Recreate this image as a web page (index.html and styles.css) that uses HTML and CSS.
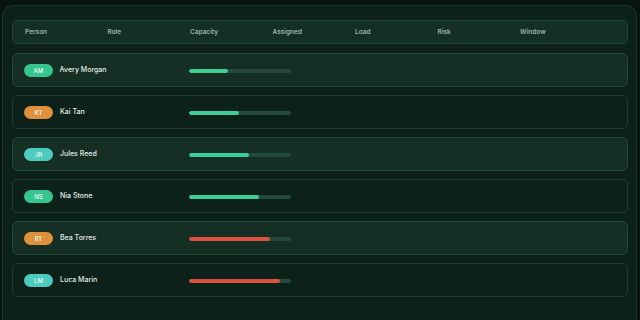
FILE: index.html
```html
<!DOCTYPE html>
<html>
<head>
<meta charset="utf-8">
<link rel="stylesheet" href="styles.css">
</head>
<body>
<div class="panel">
  <div class="head">
    <span>Person</span><span>Role</span><span>Capacity</span><span>Assigned</span><span>Load</span><span>Risk</span><span>Window</span>
  </div>
  <div class="row alt">
    <div class="who"><span class="badge green">AM</span><span class="name">Avery Morgan</span></div>
    <div></div>
    <div class="bar"><div class="fill ok" style="width:38%"></div></div>
  </div>
  <div class="row">
    <div class="who"><span class="badge orange">KT</span><span class="name">Kai Tan</span></div>
    <div></div>
    <div class="bar"><div class="fill ok" style="width:49%"></div></div>
  </div>
  <div class="row alt">
    <div class="who"><span class="badge teal">JR</span><span class="name">Jules Reed</span></div>
    <div></div>
    <div class="bar"><div class="fill ok" style="width:59%"></div></div>
  </div>
  <div class="row">
    <div class="who"><span class="badge green">NS</span><span class="name">Nia Stone</span></div>
    <div></div>
    <div class="bar"><div class="fill ok" style="width:69%"></div></div>
  </div>
  <div class="row alt">
    <div class="who"><span class="badge orange">BT</span><span class="name">Bea Torres</span></div>
    <div></div>
    <div class="bar"><div class="fill bad" style="width:79%"></div></div>
  </div>
  <div class="row">
    <div class="who"><span class="badge teal">LM</span><span class="name">Luca Marin</span></div>
    <div></div>
    <div class="bar"><div class="fill bad" style="width:89%"></div></div>
  </div>
</div>
</body>
</html>
```
FILE: styles.css
```css
html, body {
  margin: 0;
  padding: 0;
  background: #061310;
  font-family: Inter, "Noto Sans", sans-serif;
  overflow: hidden;
  height: 320px;
}
.panel {
  margin: 5px 3px 0 2px;
  height: 315px;
  box-sizing: border-box;
  background: #0c2119;
  border: 1px solid #173428;
  border-bottom: none;
  border-radius: 11px 11px 0 0;
  padding: 14px 8px 0 9px;
  display: flex;
  flex-direction: column;
  gap: 8px;
}
.head {
  height: 24px;
  flex: none;
  box-sizing: border-box;
  background: #143026;
  border: 1px solid #1f4334;
  border-radius: 5px;
  padding: 0 12px;
  display: grid;
  grid-template-columns: repeat(7, 82.5px);
  align-items: center;
  font-size: 6.5px;
  font-weight: 600;
  color: #9db3a8;
  margin-bottom: 1px;
}
.row {
  height: 34px;
  flex: none;
  box-sizing: border-box;
  background: #0c2119;
  border: 1px solid #1c3d2f;
  border-radius: 5px;
  padding: 0 11px;
  display: grid;
  grid-template-columns: 82.5px 82.5px 102px;
  align-items: center;
}
.row.alt {
  background: #152f25;
  border-color: #21463a;
}
.who {
  display: flex;
  align-items: center;
  gap: 7px;
  white-space: nowrap;
}
.badge {
  width: 29px;
  height: 13px;
  border-radius: 7px;
  display: flex;
  align-items: center;
  justify-content: center;
  font-size: 6px;
  font-weight: 500;
  color: #eefbf5;
  margin-top: 1px;
}
.green { background: #36c48f; }
.orange { background: #e0913b; }
.teal { background: #4ecbbf; }
.name {
  font-size: 7px;
  font-weight: 500;
  color: #e3ebe7;
  margin-top: -2px;
}
.bar {
  width: 102px;
  height: 4px;
  border-radius: 2px;
  background: #244a3a;
  overflow: hidden;
  margin-top: 2px;
}
.fill {
  height: 100%;
  border-radius: 2px;
}
.ok { background: #3ccf98; }
.bad { background: #e0503f; }
```
